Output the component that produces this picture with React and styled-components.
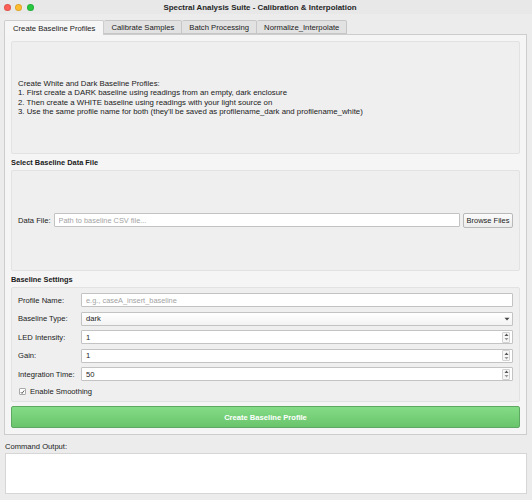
import React, { useState } from 'react';
import styled, { createGlobalStyle } from 'styled-components';

const GlobalStyle = createGlobalStyle`
  * { box-sizing: border-box; }
  body {
    margin: 0;
    background: #ececec;
    font-family: "Liberation Sans", Arial, sans-serif;
    color: #1a1a1a;
  }
`;

const Window = styled.div`
  width: 532px;
  height: 500px;
  display: flex;
  flex-direction: column;
  background: #ececec;
  overflow: hidden;
`;

const TitleBar = styled.div`
  height: 14px;
  display: grid;
  grid-template-columns: 1fr auto 1fr;
  align-items: center;
  background: #e8e8e8;
`;

const Lights = styled.div`
  display: flex;
  gap: 4.5px;
  padding-left: 3.5px;
`;

const Light = styled.span`
  width: 7px;
  height: 7px;
  border-radius: 50%;
  background: ${(p) => p.$color};
  border: 0.5px solid rgba(0, 0, 0, 0.12);
`;

const Title = styled.div`
  font-size: 7.9px;
  font-weight: bold;
  color: #262626;
  margin-right: 12px;
`;

const Body = styled.div`
  padding: 0 5px 0 4px;
  display: flex;
  flex-direction: column;
`;

const TabBar = styled.div`
  display: flex;
  align-items: flex-end;
  height: 20px;
  padding-top: 6px;
`;

const Tab = styled.div`
  height: ${(p) => (p.$active ? '15px' : '14px')};
  margin-bottom: ${(p) => (p.$active ? '-1px' : '0')};
  position: relative;
  z-index: ${(p) => (p.$active ? 2 : 1)};
  padding: 0 ${(p) => p.$pad}px;
  display: flex;
  align-items: center;
  font-size: 7.7px;
  color: #1a1a1a;
  background: ${(p) => (p.$active ? '#f6f6f6' : '#e2e2e2')};
  border: 1px solid ${(p) => (p.$active ? '#cdcdcd' : '#c6c6c6')};
  border-bottom: ${(p) => (p.$active ? 'none' : '1px solid #c6c6c6')};
  border-left: ${(p) => (p.$first ? undefined : 'none')};
  border-radius: 2px 2px 0 0;
`;

const Pane = styled.div`
  height: 401px;
  border: 1px solid #cdcdcd;
  background: #f5f5f5;
  padding: 6px;
  display: flex;
  flex-direction: column;
`;

const GroupBox = styled.div`
  height: ${(p) => p.$h}px;
  flex-shrink: 0;
  background: #efefef;
  border: 1px solid #e2e2e2;
  border-radius: 2px;
`;

const InfoBox = styled(GroupBox)`
  display: flex;
  flex-direction: column;
  justify-content: center;
  padding-left: 6px;
  font-size: 7.8px;
  line-height: 9.4px;
  color: #1a1a1a;
`;

const SectionLabel = styled.div`
  height: ${(p) => p.$h}px;
  display: flex;
  align-items: center;
  font-size: 7.4px;
  font-weight: bold;
  color: #1a1a1a;
  padding-top: 1px;
`;

const FileBox = styled(GroupBox)`
  display: flex;
  align-items: center;
  gap: 3px;
  padding: 0 6px 0 6px;
`;

const Label = styled.span`
  font-size: 7.6px;
  color: #1a1a1a;
  white-space: nowrap;
  width: ${(p) => (p.$w ? `${p.$w}px` : 'auto')};
  flex-shrink: 0;
`;

const TextInput = styled.input`
  flex: 1;
  min-width: 0;
  height: 14px;
  padding: 0 4px;
  font-family: inherit;
  font-size: 7.4px;
  color: #1a1a1a;
  background: #ffffff;
  border: 1px solid #c3c3c3;
  border-radius: 1px;
  outline: none;
  &::placeholder { color: #a3a3a3; }
`;

const BrowseButton = styled.button`
  height: 15px;
  width: 50px;
  padding: 0;
  font-family: inherit;
  font-size: 7.5px;
  color: #1a1a1a;
  background: linear-gradient(#fbfbfb, #ececec);
  border: 1px solid #b9b9b9;
  border-radius: 2px;
`;

const SettingsBox = styled(GroupBox)`
  padding: 5px 6px 0 6px;
  display: flex;
  flex-direction: column;
  gap: 4.6px;
`;

const Row = styled.div`
  display: flex;
  align-items: center;
  height: 14px;
`;

const Field = styled.div`
  flex: 1;
  height: 14px;
  display: flex;
  align-items: center;
  justify-content: space-between;
  padding: 0 2px 0 4px;
  font-size: 7.6px;
  color: #1a1a1a;
  background: ${(p) => (p.$combo ? 'linear-gradient(#ffffff, #f3f3f3)' : '#ffffff')};
  border: 1px solid #c3c3c3;
  border-radius: 1px;
`;

const SpinBox = styled.div`
  width: 8px;
  height: 11px;
  display: flex;
  align-items: center;
  justify-content: center;
  border: 1px solid #d2d2d2;
  border-radius: 1px;
  background: #f7f7f7;
`;

const CheckRow = styled.label`
  display: flex;
  align-items: center;
  gap: 4px;
  height: 12px;
  font-size: 7.6px;
  color: #1a1a1a;
`;

const CheckBox = styled.span`
  width: 7px;
  height: 7px;
  display: flex;
  align-items: center;
  justify-content: center;
  background: #fff;
  border: 1px solid #a9a9a9;
  border-radius: 1px;
  margin-left: 1px;
`;

const CreateButton = styled.button`
  margin-top: 4px;
  height: 22px;
  flex-shrink: 0;
  font-family: inherit;
  font-size: 7.6px;
  font-weight: bold;
  color: #ffffff;
  background: linear-gradient(#84dd86, #6ac46c);
  border: 1px solid #5ea961;
  border-radius: 2px;
`;

const OutputLabel = styled.div`
  height: 18px;
  display: flex;
  align-items: center;
  padding-left: 1px;
  padding-top: 5px;
  font-size: 7.6px;
  color: #1a1a1a;
`;

const OutputBox = styled.div`
  height: 41px;
  margin-left: 1px;
  background: #ffffff;
  border: 1px solid #d6d6d6;
`;

const Spin = () => (
  <SpinBox>
    <svg width="5" height="8" viewBox="0 0 5 8">
      <path d="M0.5 3 L2.5 0.5 L4.5 3 Z" fill="#555" />
      <path d="M0.5 5 L2.5 7.5 L4.5 5 Z" fill="#999" />
    </svg>
  </SpinBox>
);

const tabs = [
  { name: 'Create Baseline Profiles', pad: 8 },
  { name: 'Calibrate Samples', pad: 7 },
  { name: 'Batch Processing', pad: 7 },
  { name: 'Normalize_Interpolate', pad: 7 },
];

const App = () => {
  const [active] = useState(0);

  return (
    <Window>
      <GlobalStyle />
      <TitleBar>
        <Lights>
          <Light $color="#fe5f57" />
          <Light $color="#febc2e" />
          <Light $color="#28c840" />
        </Lights>
        <Title>Spectral Analysis Suite - Calibration &amp; Interpolation</Title>
        <div />
      </TitleBar>
      <Body>
        <TabBar>
          {tabs.map((t, i) => (
            <Tab key={t.name} $active={i === active} $first={i === 0} $pad={t.pad}>
              {t.name}
            </Tab>
          ))}
        </TabBar>
        <Pane>
          <InfoBox $h={113}>
            <div>Create White and Dark Baseline Profiles:</div>
            <div>1. First create a DARK baseline using readings from an empty, dark enclosure</div>
            <div>2. Then create a WHITE baseline using readings with your light source on</div>
            <div>3. Use the same profile name for both (they'll be saved as profilename_dark and profilename_white)</div>
          </InfoBox>

          <SectionLabel $h={16}>Select Baseline Data File</SectionLabel>
          <FileBox $h={101}>
            <Label>Data File:</Label>
            <TextInput placeholder="Path to baseline CSV file..." />
            <BrowseButton>Browse Files</BrowseButton>
          </FileBox>

          <SectionLabel $h={17}>Baseline Settings</SectionLabel>
          <SettingsBox $h={115}>
            <Row>
              <Label $w={63}>Profile Name:</Label>
              <TextInput placeholder="e.g., caseA_insert_baseline" />
            </Row>
            <Row>
              <Label $w={63}>Baseline Type:</Label>
              <Field $combo>
                <span>dark</span>
                <svg width="6" height="4" viewBox="0 0 6 4">
                  <path d="M0.5 0.8 L5.5 0.8 L3 3.5 Z" fill="#444" />
                </svg>
              </Field>
            </Row>
            <Row>
              <Label $w={63}>LED Intensity:</Label>
              <Field><span>1</span><Spin /></Field>
            </Row>
            <Row>
              <Label $w={63}>Gain:</Label>
              <Field><span>1</span><Spin /></Field>
            </Row>
            <Row>
              <Label $w={63}>Integration Time:</Label>
              <Field><span>50</span><Spin /></Field>
            </Row>
            <CheckRow>
              <CheckBox>
                <svg width="6" height="6" viewBox="0 0 6 6">
                  <path d="M1 3.2 L2.4 4.7 L5 1.2" stroke="#222" strokeWidth="0.9" fill="none" />
                </svg>
              </CheckBox>
              Enable Smoothing
            </CheckRow>
          </SettingsBox>

          <CreateButton>Create Baseline Profile</CreateButton>
        </Pane>
        <OutputLabel>Command Output:</OutputLabel>
        <OutputBox />
      </Body>
    </Window>
  );
};

export default App;
